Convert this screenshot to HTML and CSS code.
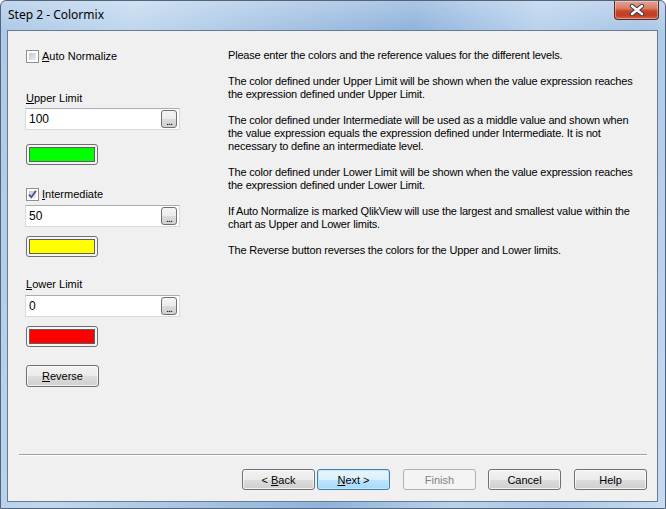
FILE: index.html
```html
<!doctype html>
<html lang="en">
  <head>
    <meta charset="UTF-8" />
    <title>Step 2 - Colormix</title>
    <link rel="stylesheet" href="styles.css">
  </head>
  <body>
    <div class="window">
      <div class="titlebar">
        <span class="title">Step 2 - Colormix</span>
        <div class="close">
          <svg width="16" height="12" viewBox="0 0 16 12">
            <path d="M3 2 L13 10 M13 2 L3 10" stroke="#3a3f4a" stroke-width="4.4" stroke-linecap="round" />
            <path d="M3 2 L13 10 M13 2 L3 10" stroke="#ffffff" stroke-width="2.4" stroke-linecap="round" />
          </svg>
        </div>
      </div>

      <div class="client">
        <div class="main">
          <!-- left column: limits and colours -->
          <div class="left">
            <label class="checkrow">
              <span class="check"></span>
              <span><u>A</u>uto Normalize</span>
            </label>

            <div class="label upper"><u>U</u>pper Limit</div>
            <div class="field">
              <span class="value">100</span>
              <span class="dots">...</span>
            </div>
            <div class="swatch wide-gap"><span class="fill green"></span></div>

            <label class="checkrow mid">
              <span class="check on">
                <svg width="11" height="11" viewBox="0 0 11 11">
                  <path d="M2 5.5 L4.3 8.3 L9 1.8" fill="none" stroke="#4a5f87" stroke-width="1.9" />
                </svg>
              </span>
              <span><u>I</u>ntermediate</span>
            </label>
            <div class="field near">
              <span class="value">50</span>
              <span class="dots">...</span>
            </div>
            <div class="swatch"><span class="fill yellow"></span></div>

            <div class="label lower"><u>L</u>ower Limit</div>
            <div class="field near">
              <span class="value">0</span>
              <span class="dots">...</span>
            </div>
            <div class="swatch"><span class="fill red"></span></div>

            <button class="btn reverse"><u>R</u>everse</button>
          </div>

          <!-- right column: help text -->
          <div class="help">
            <p>Please enter the colors and the reference values for the different levels.</p>
            <p>The color defined under Upper Limit will be shown when the value expression reaches<br>the expression defined under Upper Limit.</p>
            <p>The color defined under Intermediate will be used as a middle value and shown when<br>the value expression equals the expression defined under Intermediate. It is not<br>necessary to define an intermediate level.</p>
            <p>The color defined under Lower Limit will be shown when the value expression reaches<br>the expression defined under Lower Limit.</p>
            <p>If Auto Normalize is marked QlikView will use the largest and smallest value within the<br>chart as Upper and Lower limits.</p>
            <p>The Reverse button reverses the colors for the Upper and Lower limits.</p>
          </div>
        </div>

        <div class="footer">
          <div class="sep"></div>
          <div class="buttons">
            <button class="btn">&lt; <u>B</u>ack</button>
            <button class="btn default"><u>N</u>ext &gt;</button>
            <button class="btn disabled">Finish</button>
            <button class="btn">Cancel</button>
            <button class="btn">Help</button>
          </div>
        </div>
      </div>
    </div>
  </body>
</html>
```

FILE: styles.css
```css
/* Base */
body {
  margin: 0;
  padding: 0;
  font-family: "Liberation Sans", Arial, sans-serif;
  font-size: 11px;
  color: #000;
  background-color: #fff;
}

u {
  text-decoration: underline;
  text-underline-offset: 1px;
}

/* Window frame - Aero glass */
.window {
  width: 666px;
  height: 509px;
  box-sizing: border-box;
  display: flex;
  flex-direction: column;
  border: 1px solid #52657a;
  border-radius: 6px 6px 0 0;
  background:
    linear-gradient(180deg, rgba(255, 255, 255, 0.25) 0%, rgba(255, 255, 255, 0) 30px),
    linear-gradient(100deg, #adc9e7 0%, #c0d7ef 18%, #a3c1e2 40%, #8fb3dc 55%, #b9d2ed 72%, #a9c6e6 85%, #c6dcf2 100%);
  overflow: hidden;
}

.titlebar {
  height: 29px;
  display: flex;
  justify-content: space-between;
  align-items: flex-start;
  padding-left: 7px;
}

.title {
  font-family: "Noto Sans", "Open Sans", sans-serif;
  font-size: 12px;
  line-height: 28px;
  color: #000;
}

.close {
  width: 45px;
  height: 19px;
  margin-right: 6px;
  box-sizing: border-box;
  display: flex;
  justify-content: center;
  align-items: center;
  border: 1px solid #5a2a22;
  border-top: none;
  border-radius: 0 0 4px 4px;
  background: linear-gradient(180deg, #e7a08f 0%, #d98068 40%, #c8462a 55%, #c23d22 80%, #d46a4e 100%);
  box-shadow: inset 0 0 0 1px rgba(255, 255, 255, 0.35);
}

/* Client area */
.client {
  flex: 1;
  display: flex;
  flex-direction: column;
  margin: 0 7px 6px 6px;
  border: 1px solid #6b7b8e;
  background-color: #f0f0f0;
}

.main {
  flex: 1;
  display: flex;
}

/* Left column */
.left {
  width: 202px;
  padding: 18px 0 0 18px;
  display: flex;
  flex-direction: column;
  align-items: flex-start;
}

.checkrow {
  display: flex;
  align-items: center;
  gap: 3px;
  height: 13px;
  line-height: 13px;
  margin-top: 1px;
}

.checkrow.mid {
  margin-top: 23px;
}

.check {
  width: 13px;
  height: 13px;
  box-sizing: border-box;
  border: 1px solid #8e8f8f;
  background:
    linear-gradient(135deg, #c4c8cf 0%, #eceef1 100%) content-box,
    #fff;
  padding: 2px;
  display: flex;
  justify-content: center;
  align-items: center;
  position: relative;
}

.check svg {
  position: absolute;
  left: 0;
  top: 0;
}

.label {
  height: 13px;
  line-height: 13px;
}

.label.upper {
  margin-top: 29px;
}

.label.lower {
  margin-top: 21px;
}

.field {
  width: 155px;
  height: 22px;
  margin: 3px 0 0 -1px;
  box-sizing: border-box;
  display: flex;
  justify-content: space-between;
  align-items: center;
  padding: 0 2px 0 3px;
  border: 1px solid #d5dbe3;
  border-top-color: #abadb3;
  background-color: #fff;
  font-size: 12px;
}

.field.near {
  margin-top: 4px;
}

.dots {
  width: 16px;
  height: 18px;
  box-sizing: border-box;
  border: 1px solid #707070;
  border-radius: 3px;
  background: linear-gradient(180deg, #f4f4f4 0%, #ebebeb 50%, #dcdcdc 51%, #d0d0d0 100%);
  font-size: 11px;
  line-height: 20px;
  text-align: center;
  color: #000;
  letter-spacing: -1px;
  overflow: hidden;
}

.swatch {
  width: 72px;
  height: 21px;
  margin-top: 9px;
  box-sizing: border-box;
  padding: 2px;
  border: 1px solid #707070;
  border-radius: 3px;
  background-color: #f5f5f5;
  display: flex;
}

.swatch.wide-gap {
  margin-top: 14px;
}

.fill {
  flex: 1;
  border: 1px solid #5e5e5e;
}

.fill.green {
  background-color: #00ff00;
}

.fill.yellow {
  background-color: #ffff00;
}

.fill.red {
  background-color: #ff0000;
}

/* Buttons - Windows 7 look */
.btn {
  width: 73px;
  height: 21px;
  padding: 0;
  box-sizing: border-box;
  font-family: "Liberation Sans", Arial, sans-serif;
  font-size: 11px;
  color: #000;
  border: 1px solid #707070;
  border-radius: 3px;
  background: linear-gradient(180deg, #f2f2f2 0%, #ebebeb 50%, #dddddd 51%, #cfcfcf 100%);
  box-shadow: inset 0 0 0 1px rgba(255, 255, 255, 0.7);
}

.btn.reverse {
  height: 22px;
  margin-top: 18px;
}

.btn.default {
  border-color: #3c7fb1;
  background: linear-gradient(180deg, #eaf6fd 0%, #d9f0fc 50%, #bee6fd 51%, #a7d9f5 100%);
  box-shadow: inset 0 0 0 1px #c5e6f9;
}

.btn.disabled {
  border-color: #adb2b5;
  background: #f4f4f4;
  color: #838383;
  box-shadow: none;
}

/* Help text */
.help {
  padding-top: 18px;
  line-height: 13px;
  white-space: nowrap;
  letter-spacing: -0.18px;
}

.help p {
  margin: 0 0 13px 0;
}

/* Footer */
.footer {
  padding: 0 10px 11px 11px;
}

.sep {
  border-top: 1px solid #a0a0a0;
  border-bottom: 1px solid #ffffff;
  margin-bottom: 13px;
}

.buttons {
  display: flex;
  justify-content: flex-end;
}

.buttons .btn + .btn {
  margin-left: 13px;
}

.buttons .btn.default {
  margin-left: 2px;
}

.buttons .btn.disabled + .btn {
  margin-left: 12px;
}
```
